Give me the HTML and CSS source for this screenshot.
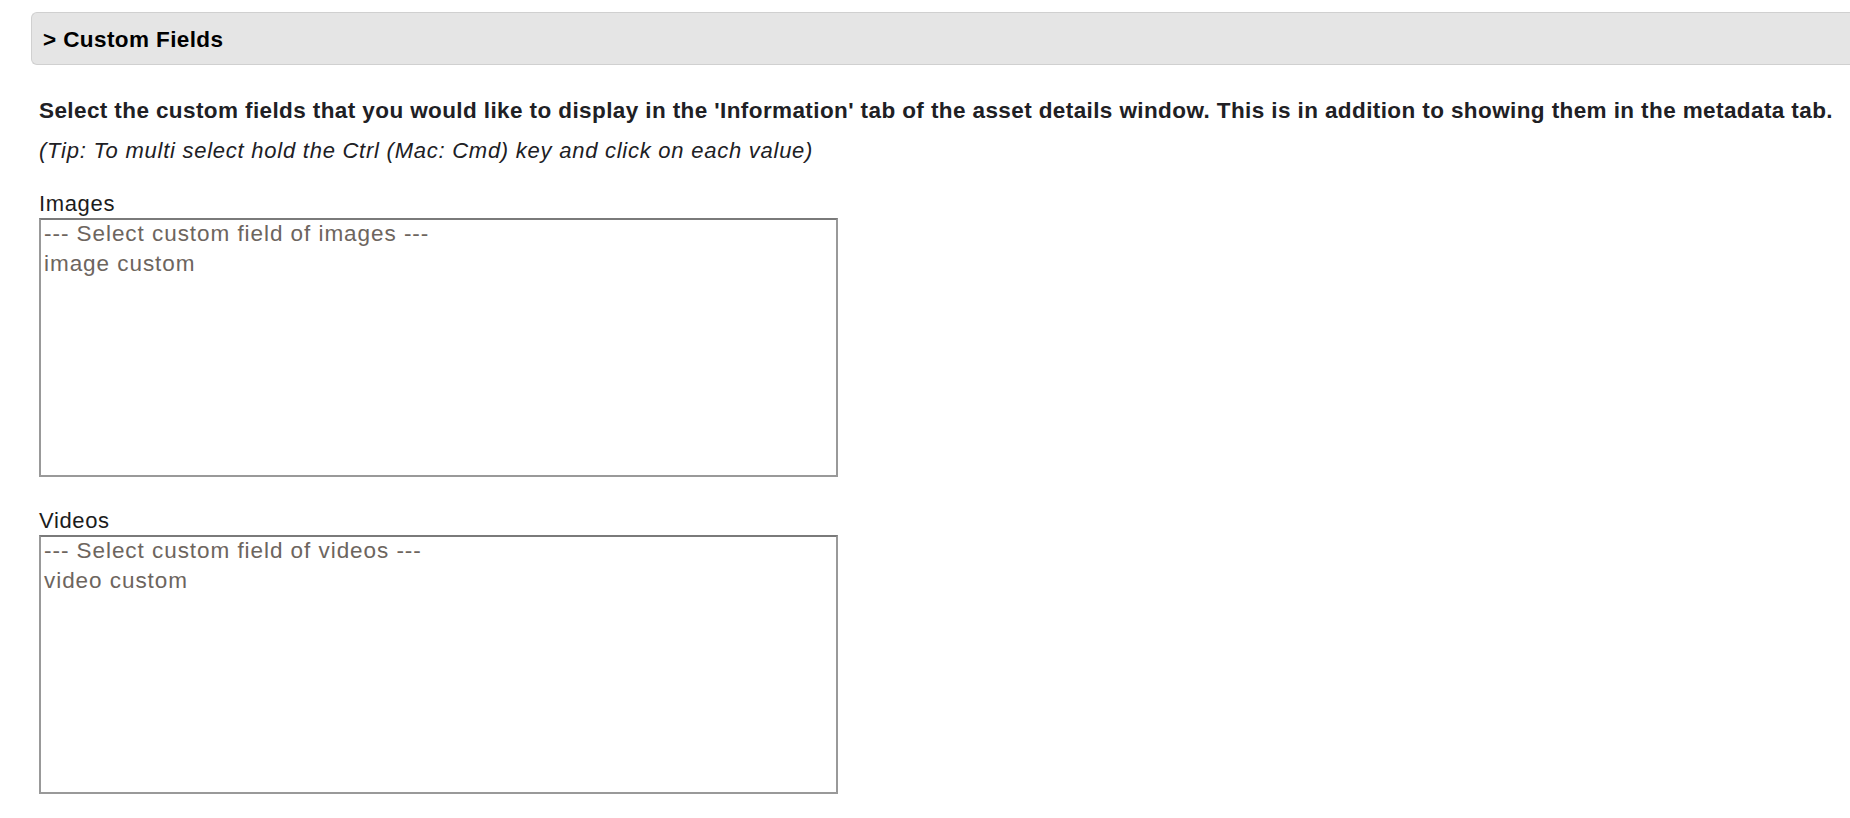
FILE: index.html
```html
<!DOCTYPE html>
<html>
<head>
<meta charset="utf-8">
<link rel="stylesheet" href="styles.css">
</head>
<body>
<div class="page">
  <div class="section-bar">&gt; Custom Fields</div>
  <div class="content">
    <p class="intro">Select the custom fields that you would like to display in the 'Information' tab of the asset details window. This is in addition to showing them in the metadata tab.</p>
    <p class="tip">(Tip: To multi select hold the Ctrl (Mac: Cmd) key and click on each value)</p>
    <div class="field">
      <label class="field-label">Images</label>
      <div class="listbox" role="listbox" aria-multiselectable="true">
        <div class="option" role="option">--- Select custom field of images ---</div>
        <div class="option" role="option">image custom</div>
      </div>
    </div>
    <div class="field">
      <label class="field-label">Videos</label>
      <div class="listbox" role="listbox" aria-multiselectable="true">
        <div class="option" role="option">--- Select custom field of videos ---</div>
        <div class="option" role="option">video custom</div>
      </div>
    </div>
  </div>
</div>
</body>
</html>
```
FILE: styles.css
```css
html, body {
  margin: 0;
  padding: 0;
  background: #ffffff;
}
body {
  font-family: "Liberation Sans", Arial, Helvetica, sans-serif;
  color: #222222;
  overflow: hidden;
}
.page {
  padding: 12px 0 0 31px;
}
.section-bar {
  box-sizing: border-box;
  height: 53px;
  background: #e5e5e5;
  border: 1px solid #d0d0d0;
  border-right: none;
  border-radius: 6px 0 0 6px;
  padding: 2px 0 0 11px;
  line-height: 49px;
  font-size: 22.5px;
  letter-spacing: 0.4px;
  font-weight: bold;
  color: #000000;
  white-space: nowrap;
}
.content {
  padding-left: 8px;
}
.intro {
  margin: 31px 0 0 0;
  font-size: 22.5px;
  line-height: 30px;
  letter-spacing: 0.4px;
  font-weight: bold;
  color: #202024;
  white-space: nowrap;
}
.tip {
  margin: 11px 0 0 0;
  font-size: 22px;
  line-height: 28px;
  letter-spacing: 0.75px;
  font-style: italic;
  color: #202024;
  white-space: nowrap;
}
.field {
  display: flex;
  flex-direction: column;
  align-items: flex-start;
  margin-top: 25px;
}
.field + .field {
  margin-top: 30px;
}
.field-label {
  font-size: 22px;
  line-height: 28px;
  letter-spacing: 0.65px;
  color: #1c1c1c;
}
.listbox {
  box-sizing: border-box;
  width: 799px;
  height: 259px;
  border: 2px solid #999999;
  border-top-color: #7a7a7a;
  padding: 1px 3px 0;
  background: #ffffff;
}
.option {
  font-size: 22.5px;
  line-height: 25px;
  padding-bottom: 5px;
  letter-spacing: 0.95px;
  color: #6d655e;
  white-space: nowrap;
}
```
